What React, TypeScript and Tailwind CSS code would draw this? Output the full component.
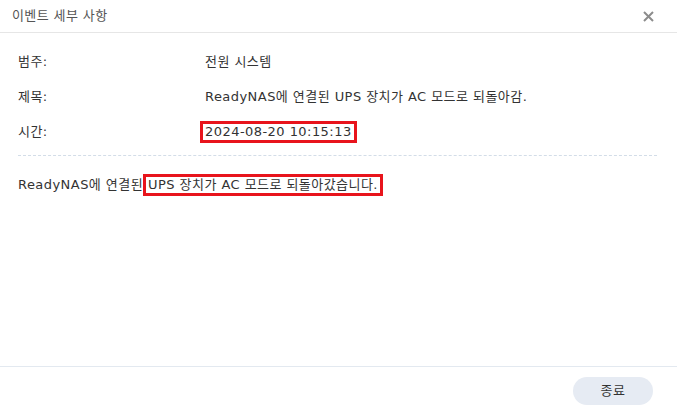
import React from "react";

const rows = [
  { label: "범주:", value: "전원 시스템" },
  { label: "제목:", value: "ReadyNAS에 연결된 UPS 장치가 AC 모드로 되돌아감." },
];

const App = () => {
  return (
    <div
      className="flex h-[413px] w-[677px] flex-col bg-white text-[13px] tracking-[0.45px] text-[#333]"
      style={{ fontFamily: '"DejaVu Sans", "Noto Sans CJK KR", sans-serif' }}
    >
      {/* header */}
      <div className="flex h-[33px] items-center justify-between border-b border-[#e6e6e6] pl-[12px] pr-[22px]">
        <span className="text-[13px] tracking-[0.4px] text-[#555]">이벤트 세부 사항</span>
        <button className="flex h-[14px] w-[14px] items-center justify-center text-[#8c8c8c]">
          <svg width="11" height="11" viewBox="0 0 11 11">
            <path d="M1 1L10 10M10 1L1 10" stroke="currentColor" strokeWidth="2" />
          </svg>
        </button>
      </div>

      {/* body */}
      <div className="flex flex-1 flex-col px-[18px] pt-[11px]">
        {rows.map((row) => (
          <div key={row.label} className="flex h-[35px] items-center">
            <span className="w-[187px]">{row.label}</span>
            <span>{row.value}</span>
          </div>
        ))}
        <div className="flex h-[35px] items-center">
          <span className="w-[182px]">시간:</span>
          <span className="border-[3px] border-[#e8141c] px-[2px] leading-[16px]">
            2024-08-20 10:15:13
          </span>
        </div>
        <div className="mt-[6px] mr-[2px] border-t border-dashed border-[#d3dde8]" />
        <div className="mt-[18px] flex items-center">
          <span>ReadyNAS에 연결된</span>
          <span className="border-[3px] border-[#e8141c] px-[2px] leading-[16px]">
            UPS 장치가 AC 모드로 되돌아갔습니다.
          </span>
        </div>
      </div>

      {/* footer */}
      <div className="flex h-[47px] items-start justify-end border-t border-[#e3e9f0] pr-[24px] pt-[10px]">
        <button className="h-[28px] w-[80px] rounded-full bg-[#e6ebf3] text-[13px] text-[#333]">
          종료
        </button>
      </div>
    </div>
  );
};

export default App;
